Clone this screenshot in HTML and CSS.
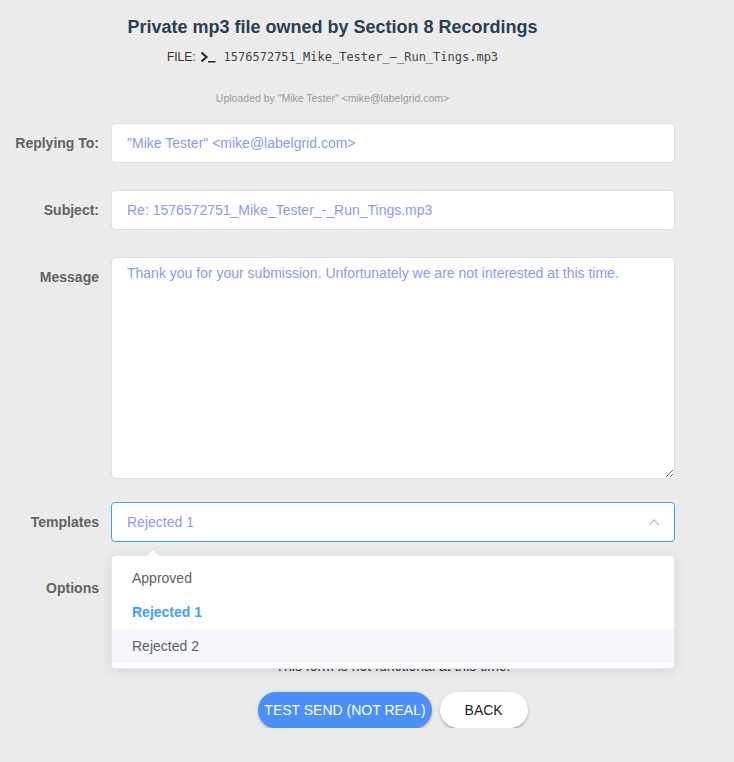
FILE: index.html
```html
<!DOCTYPE html>
<html lang="en">
<head>
  <meta charset="UTF-8">
  <meta name="viewport" content="width=device-width, initial-scale=1.0">
  <title>Reply to submission</title>
  <link rel="stylesheet" href="styles.css">
</head>
<body>

  <div class="page">
    <div class="file-header">
      <h1>Private mp3 file owned by Section 8 Recordings</h1>
      <div class="file-name">
        <span class="file-label">FILE:</span>
        <svg class="prompt-icon" width="16" height="12" viewBox="0 0 16 12">
          <path d="M1.5 1.5 L6.5 6 L1.5 10.5" fill="none" stroke="#2c2c2c" stroke-width="2.2"/>
          <path d="M8 10.8 H15.5" stroke="#2c2c2c" stroke-width="1.6"/>
        </svg>
        <span class="mono">1576572751_Mike_Tester_–_Run_Tings.mp3</span>
      </div>
      <div class="uploaded">Uploaded by "Mike Tester" &lt;mike@labelgrid.com&gt;</div>
    </div>

    <form class="reply-form">
      <div class="form-item">
        <label class="form-label">Replying To:</label>
        <div class="form-control">
          <input class="text-input" type="text" value='"Mike Tester" <mike@labelgrid.com>'>
        </div>
      </div>

      <div class="form-item">
        <label class="form-label">Subject:</label>
        <div class="form-control">
          <input class="text-input" type="text" value="Re: 1576572751_Mike_Tester_-_Run_Tings.mp3">
        </div>
      </div>

      <div class="form-item item-message">
        <label class="form-label">Message</label>
        <div class="form-control">
          <textarea class="text-area">Thank you for your submission. Unfortunately we are not interested at this time.</textarea>
        </div>
      </div>

      <div class="form-item item-templates">
        <label class="form-label">Templates</label>
        <div class="form-control select-wrap">
          <div class="select-box is-open">
            <span>Rejected 1</span>
            <svg class="select-arrow" width="12" height="8" viewBox="0 0 12 8">
              <path d="M1 7 L6 2 L11 7" fill="none" stroke="#c0c4cc" stroke-width="1.3"/>
            </svg>
          </div>

          <!-- open dropdown list -->
          <div class="dropdown">
            <span class="dropdown-arrow"></span>
            <ul>
              <li>Approved</li>
              <li class="selected">Rejected 1</li>
              <li class="hover">Rejected 2</li>
            </ul>
          </div>
        </div>
      </div>

      <div class="form-item item-options">
        <label class="form-label">Options</label>
        <div class="form-control options">
          <input type="checkbox" checked>
          <input type="checkbox">
        </div>
      </div>

      <div class="form-actions">
        <p class="notice">This form is not functional at this time.</p>
        <div class="buttons">
          <button type="button" class="btn btn-primary">Test send (not real)</button>
          <button type="button" class="btn btn-plain">Back</button>
        </div>
      </div>
    </form>
  </div>

</body>
</html>
```

FILE: styles.css
```css
body {
  font-family: "Liberation Sans", Arial, sans-serif;
  background-color: #ebebeb;
  margin: 0;
  color: #2c3e50;
}

.page {
  width: 675px;
}

/* header */

.file-header {
  text-align: center;
  padding-right: 10px;
}

h1 {
  margin: 16px 0 0;
  font-size: 18px;
  line-height: 22px;
  font-weight: 600;
  color: #2c3e50;
}

.file-name {
  margin-top: 11px;
  height: 16px;
  display: flex;
  align-items: center;
  justify-content: center;
  gap: 4px;
  font-size: 12px;
  color: #333;
}

.prompt-icon {
  margin-right: 4px;
}

.mono {
  font-family: "DejaVu Sans Mono", "Liberation Mono", monospace;
  font-size: 12px;
  color: #444;
}

.uploaded {
  margin-top: 27px;
  font-size: 10.5px;
  line-height: 12px;
  color: #999;
}

/* form */

.reply-form {
  margin-top: 19px;
}

.form-item {
  display: flex;
  margin-bottom: 27px;
}

.form-label {
  width: 111px;
  flex-shrink: 0;
  box-sizing: border-box;
  padding-right: 12px;
  text-align: right;
  font-size: 14px;
  font-weight: bold;
  line-height: 40px;
  color: #606266;
}

.form-control {
  flex: 1;
  position: relative;
}

.text-input,
.text-area,
.select-box {
  display: block;
  width: 100%;
  box-sizing: border-box;
  border: 1px solid #dcdfe6;
  border-radius: 4px;
  background: #fff;
  font-family: inherit;
  font-size: 14px;
  color: #8e97f6;
  outline: none;
}

.text-input {
  height: 40px;
  padding: 0 15px;
}

.text-area {
  height: 222px;
  padding: 5px 15px;
  line-height: 20px;
  resize: vertical;
}

.item-message {
  margin-bottom: 23px;
}

.select-box {
  height: 40px;
  padding: 0 15px;
  display: flex;
  align-items: center;
  justify-content: space-between;
}

.select-box.is-open {
  border-color: #409eff;
}

.select-arrow {
  margin-right: -1px;
}

/* dropdown */

.dropdown {
  position: absolute;
  top: 53px;
  left: 0;
  right: 0;
  z-index: 10;
  background: #fff;
  border: 1px solid #e4e7ed;
  border-radius: 4px;
  box-shadow: 0 2px 12px rgba(0, 0, 0, 0.1);
}

.dropdown-arrow {
  position: absolute;
  top: -6px;
  left: 35px;
  width: 0;
  height: 0;
  border: 6px solid transparent;
  border-top-width: 0;
  border-bottom-color: #fff;
  filter: drop-shadow(0 -1px 0 #e4e7ed);
}

.dropdown ul {
  list-style: none;
  margin: 0;
  padding: 5px 0;
}

.dropdown li {
  height: 34px;
  line-height: 34px;
  padding: 0 20px;
  font-size: 14px;
  color: #606266;
}

.dropdown li.selected {
  color: #409eff;
  font-weight: bold;
}

.dropdown li.hover {
  background-color: #f5f7fa;
}

.item-templates {
  margin-bottom: 26px;
}

/* options + actions */

.options {
  display: flex;
  align-items: center;
  gap: 30px;
}

.item-options {
  margin-bottom: 0;
}

.form-actions {
  margin-left: 111px;
  text-align: center;
}

.notice {
  margin: 48px 0 0;
  font-size: 14px;
  line-height: 20px;
  color: #333;
}

.buttons {
  margin-top: 16px;
  display: flex;
  justify-content: center;
  gap: 8px;
}

.btn {
  height: 36px;
  min-width: 88px;
  padding: 0 6px;
  border: none;
  border-radius: 18px;
  font-family: inherit;
  font-size: 14px;
  font-weight: 500;
  text-transform: uppercase;
  cursor: pointer;
  box-shadow: 0 3px 1px -2px rgba(0,0,0,.2), 0 2px 2px 0 rgba(0,0,0,.14), 0 1px 5px 0 rgba(0,0,0,.12);
}

.btn-primary {
  background-color: #4a90f7;
  color: #fff;
}

.btn-plain {
  background-color: #fff;
  color: #222;
}
```
